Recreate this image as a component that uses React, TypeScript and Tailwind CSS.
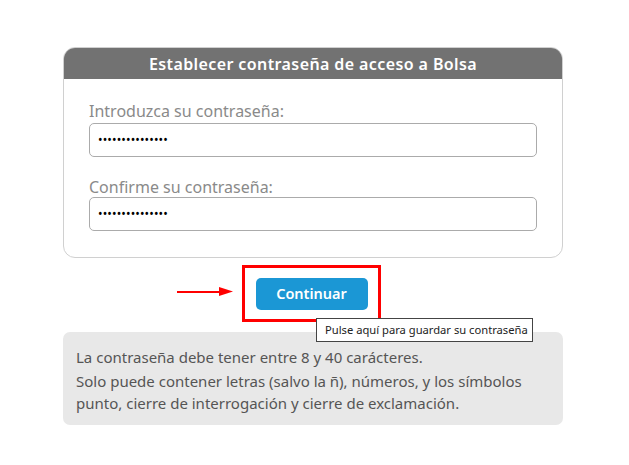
import React from "react"

export default function App() {
  const dots = "•••••••••••••••"

  return (
    <div className="min-h-[465px] w-[629px] bg-white" style={{ fontFamily: "'Noto Sans', 'Open Sans', sans-serif" }}>
      <div className="ml-[63px] w-[500px] pt-[47px]">
        {/* Card */}
        <div className="rounded-[12px] border border-[#d0d0d0] overflow-hidden">
          <div className="h-[31px] bg-[#727272] flex items-center justify-center">
            <span className="text-white font-semibold text-[16px] tracking-[0.4px]">
              Establecer contraseña de acceso a Bolsa
            </span>
          </div>
          <div className="px-[25px] pt-[22px] pb-[26px] flex flex-col">
            <label className="text-[16px] leading-[20px] text-[#8a8a8a]">Introduzca su contraseña:</label>
            <div className="mt-[2px] h-[34px] rounded-[5px] border border-[#ababab] flex items-center px-[8px]">
              <span className="text-[12px] tracking-[0.15px] text-black">{dots}</span>
            </div>
            <label className="mt-[20px] text-[16px] leading-[20px] text-[#8a8a8a]">Confirme su contraseña:</label>
            <div className="h-[34px] rounded-[5px] border border-[#ababab] flex items-center px-[8px]">
              <span className="text-[12px] tracking-[0.15px] text-black">{dots}</span>
            </div>
          </div>
        </div>

        {/* Button row */}
        <div className="relative h-[74px]">
          <div className="absolute left-[114px] top-[29px] flex items-center">
            <div className="h-[2px] w-[42px] bg-[#ff0000]" />
            <svg width="14" height="9" viewBox="0 0 14 9">
              <path d="M0 0 L14 4.5 L0 9 Z" fill="#ff0000" />
            </svg>
          </div>
          <div className="absolute left-[179px] top-[7px] w-[139px] h-[57px] border-[3px] border-[#ff0000] flex items-center justify-center">
            <button className="w-[112px] h-[32px] rounded-[5px] bg-[#1b97d5] text-white font-semibold text-[14.5px]">
              Continuar
            </button>
          </div>
          <div className="absolute left-[253px] top-[60px] z-10 h-[24px] w-[217px] pl-[8px] bg-white border border-[#444] flex items-center text-[11.2px] text-[#222]">
            Pulse aquí para guardar su contraseña
          </div>
        </div>

        {/* Info box */}
        <div className="rounded-[7px] bg-[#e8e8e8] px-[13px] pt-[14px] pb-[11px] text-[15px] text-[#555] leading-[22px]">
          <p className="mb-[2px]">La contraseña debe tener entre 8 y 40 carácteres.</p>
          <p>Solo puede contener letras (salvo la ñ), números, y los símbolos punto, cierre de interrogación y cierre de exclamación.</p>
        </div>
      </div>
    </div>
  )
}
